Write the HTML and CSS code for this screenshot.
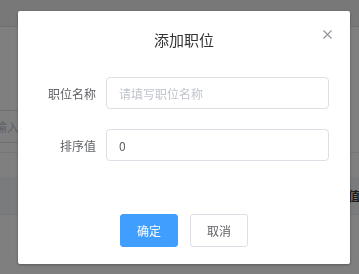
FILE: index.html
```html
<!DOCTYPE html>
<html lang="zh-CN">
<head>
  <meta charset="UTF-8">
  <meta name="viewport" content="width=device-width, initial-scale=1.0">
  <title>职位管理</title>
  <link rel="stylesheet" href="styles.css">
</head>
<body>
<div class="page">
  <div class="topbar"></div>
  <div class="search-row">
    <div class="search-input">请输入职位名称</div>
  </div>
  <div class="divider"></div>
  <div class="table-head">
    <span class="th">排序值</span>
  </div>
</div>

<div class="mask"></div>

<div class="dialog">
  <div class="dialog-header">
    <span class="dialog-title">添加职位</span>
    <button class="dialog-close" aria-label="关闭">
      <svg width="9" height="9" viewBox="0 0 9 9">
        <path d="M0.5 0.5 L8.5 8.5 M8.5 0.5 L0.5 8.5" stroke="#909399" stroke-width="1.1" fill="none"/>
      </svg>
    </button>
  </div>
  <div class="dialog-body">
    <div class="form-item">
      <label class="form-label">职位名称</label>
      <input class="form-input" type="text" placeholder="请填写职位名称">
    </div>
    <div class="form-item">
      <label class="form-label">排序值</label>
      <input class="form-input" type="text" value="0">
    </div>
  </div>
  <div class="dialog-footer">
    <button class="btn btn-primary">确定</button>
    <button class="btn">取消</button>
  </div>
</div>
</body>
</html>
```

FILE: styles.css
```css
html, body {
  margin: 0;
  padding: 0;
  width: 359px;
  height: 274px;
  overflow: hidden;
  background-color: #fff;
  font-family: "Noto Sans CJK SC", "Noto Sans", sans-serif;
}
.page {
  width: 100%;
}
.topbar {
  height: 26px;
  background-color: #f1f1f1;
  border-bottom: 1px solid #e2e2e2;
}
.search-row {
  margin-top: 83px;
  margin-left: -30px;
}
.search-input {
  box-sizing: border-box;
  width: 260px;
  height: 33px;
  line-height: 31px;
  padding-left: 12px;
  border: 1px solid #dcdfe6;
  border-radius: 4px;
  color: #c0c4cc;
  font-size: 12px;
}
.divider {
  margin-top: 9px;
  border-top: 1px solid #ebeef5;
}
.table-head {
  margin-top: 24px;
  height: 37px;
  background-color: #f5f7fa;
  border-bottom: 1px solid #ebeef5;
  display: flex;
  align-items: center;
  justify-content: flex-end;
}
.th {
  font-size: 12px;
  font-weight: bold;
  color: #3a3a3a;
  margin-right: -1px;
}
.mask {
  position: fixed;
  top: 0;
  left: 0;
  right: 0;
  bottom: 0;
  background-color: rgba(0, 0, 0, 0.5);
}
.dialog {
  position: absolute;
  left: 18px;
  top: 11px;
  width: 332px;
  height: 253px;
  box-sizing: border-box;
  background-color: #fff;
  border-radius: 2px;
  box-shadow: 0 1px 3px rgba(0, 0, 0, 0.3);
}
.dialog-header {
  padding-top: 16px;
  height: 24px;
  text-align: center;
}
.dialog-title {
  font-size: 15px;
  line-height: 24px;
  color: #303133;
}
.dialog-close {
  position: absolute;
  top: 19px;
  right: 18px;
  padding: 0;
  border: none;
  background: none;
  width: 9px;
  height: 9px;
  line-height: 0;
  cursor: pointer;
}
.dialog-body {
  padding: 26px 21px 0 0;
}
.form-item {
  display: flex;
  align-items: center;
  margin-bottom: 20px;
}
.form-item:last-child {
  margin-bottom: 0;
}
.form-label {
  box-sizing: border-box;
  width: 88px;
  padding-right: 10px;
  text-align: right;
  font-size: 12px;
  color: #606266;
}
.form-input {
  box-sizing: border-box;
  flex: 1;
  height: 32px;
  padding: 0 12px;
  border: 1px solid #dcdfe6;
  border-radius: 4px;
  font-family: inherit;
  font-size: 12px;
  color: #606266;
  outline: none;
}
.form-input::placeholder {
  color: #c0c4cc;
}
.dialog-footer {
  margin-top: 53px;
  display: flex;
  justify-content: center;
  gap: 12px;
}
.btn {
  box-sizing: border-box;
  width: 58px;
  height: 33px;
  padding: 0;
  border: 1px solid #dcdfe6;
  border-radius: 3px;
  background-color: #fff;
  color: #606266;
  font-family: inherit;
  font-size: 12px;
  cursor: pointer;
}
.btn-primary {
  background-color: #409eff;
  border-color: #409eff;
  color: #fff;
}
```
